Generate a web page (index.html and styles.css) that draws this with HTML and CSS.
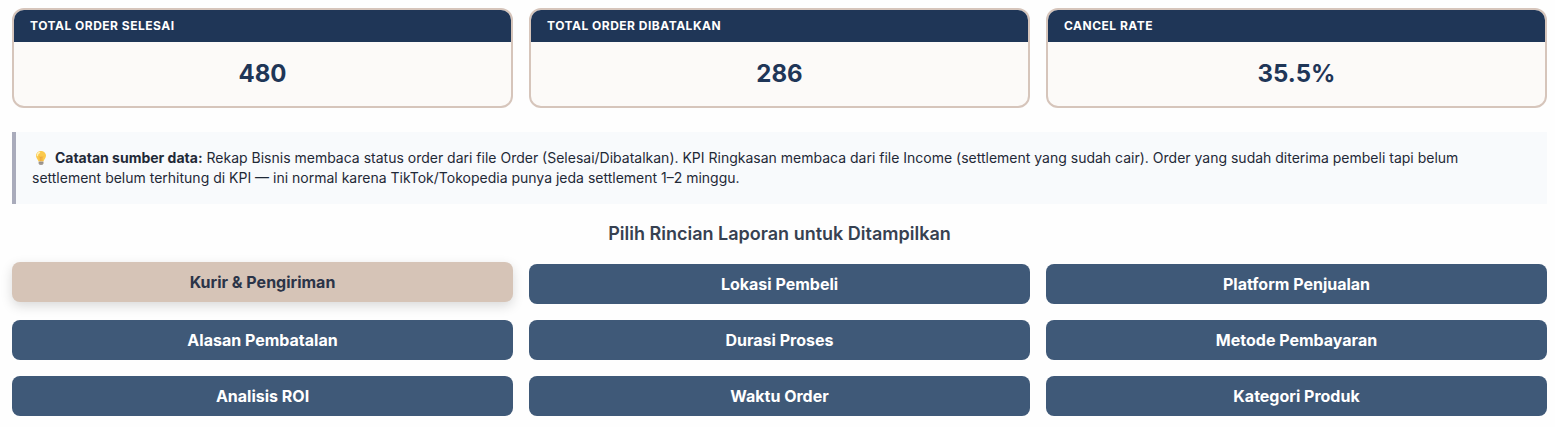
FILE: index.html
```html
<!DOCTYPE html>
<html lang="id">
<head>
    <meta charset="UTF-8">
    <title>Rekap Bisnis</title>
    <link rel="stylesheet" href="styles.css">
</head>
<body>
    <div class="kpi-grid">
        <div class="kpi-card">
            <div class="kpi-title">TOTAL ORDER SELESAI</div>
            <div class="kpi-value">480</div>
        </div>
        <div class="kpi-card">
            <div class="kpi-title">TOTAL ORDER DIBATALKAN</div>
            <div class="kpi-value">286</div>
        </div>
        <div class="kpi-card">
            <div class="kpi-title">CANCEL RATE</div>
            <div class="kpi-value">35.5%</div>
        </div>
    </div>

    <div class="note">
        <svg class="note-icon" viewBox="0 0 19 16" aria-hidden="true">
            <path d="M9 1C6 1 4 3.2 4 5.8c0 2.4 2 3.4 2.5 5.7h5C12 9.200 14 8.200 14 5.800 14 3.200 12 1 9 1z" fill="#fbc94b"/>
            <path d="M7.500 2.500C6 3 5.300 4.200 5.400 5.600" fill="none" stroke="#fff0b5" stroke-width="1.400" stroke-linecap="round"/>
            <path d="M7.300 6.500l1 1.200.8-1 .8 1 1-1.200M8.300 7.700v3.500M9.900 7.700v3.500" fill="none" stroke="#e8963a" stroke-width=".7"/>
            <path d="M6.700 11.500h4.700v2.200l-1 1.300H7.700l-1-1.300z" fill="#a9a19a"/>
            <path d="M6.700 12.800h4.700" stroke="#7d7772" stroke-width=".6"/>
        </svg>
        <strong>Catatan sumber data:</strong>
        <span>Rekap Bisnis membaca status order dari file Order (Selesai/Dibatalkan). KPI Ringkasan membaca dari file Income (settlement yang sudah cair). Order yang sudah diterima pembeli tapi belum settlement belum terhitung di KPI — ini normal karena TikTok/Tokopedia punya jeda settlement 1–2 minggu.</span>
    </div>

    <h2>Pilih Rincian Laporan untuk Ditampilkan</h2>

    <div class="menu-grid">
        <button class="menu-btn active">Kurir &amp; Pengiriman</button>
        <button class="menu-btn">Lokasi Pembeli</button>
        <button class="menu-btn">Platform Penjualan</button>
        <button class="menu-btn">Alasan Pembatalan</button>
        <button class="menu-btn">Durasi Proses</button>
        <button class="menu-btn">Metode Pembayaran</button>
        <button class="menu-btn">Analisis ROI</button>
        <button class="menu-btn">Waktu Order</button>
        <button class="menu-btn">Kategori Produk</button>
    </div>
</body>
</html>
```
FILE: styles.css
```css
body {
    font-family: Inter, sans-serif;
    background-color: #fefefe;
    color: #1f2937;
    margin: 0;
    padding: 8px 8px 8px 12px;
}

.kpi-grid, .menu-grid {
    display: grid;
    grid-template-columns: repeat(3, 1fr);
    gap: 16px;
}

.kpi-card {
    background-color: #fcfaf8;
    border: 2px solid #d6c5bb;
    border-radius: 12px;
    overflow: hidden;
}

.kpi-title {
    background-color: #1f3657;
    color: #ffffff;
    font-size: 12px;
    font-weight: 700;
    line-height: 16px;
    letter-spacing: 0.5px;
    padding: 8px 16px;
}

.kpi-value {
    color: #1f3657;
    font-size: 24px;
    font-weight: 700;
    line-height: 32px;
    text-align: center;
    padding: 16px;
}

/* Catatan */
.note {
    background-color: #f8fafc;
    border-left: 4px solid #a9abbb;
    font-size: 14px;
    line-height: 20px;
    margin-top: 24px;
    padding: 16px 20px 16px 16px;
}

.note-icon {
    width: 19px;
    height: 16px;
    vertical-align: -3px;
}

h2 {
    color: #374151;
    font-size: 18px;
    font-weight: 600;
    line-height: 28px;
    text-align: center;
    margin: 16px 0;
}

/* Tombol laporan */
.menu-btn {
    background-color: #3f5978;
    color: #ffffff;
    font-family: inherit;
    font-size: 16px;
    font-weight: 700;
    line-height: 24px;
    border: none;
    border-radius: 8px;
    padding: 8px 16px;
    cursor: pointer;
}

.menu-btn.active {
    background-color: #d6c4b7;
    color: #2b3448;
    transform: translateY(-2px);
    box-shadow: 0 4px 12px rgba(0, 0, 0, 0.15);
}
```
